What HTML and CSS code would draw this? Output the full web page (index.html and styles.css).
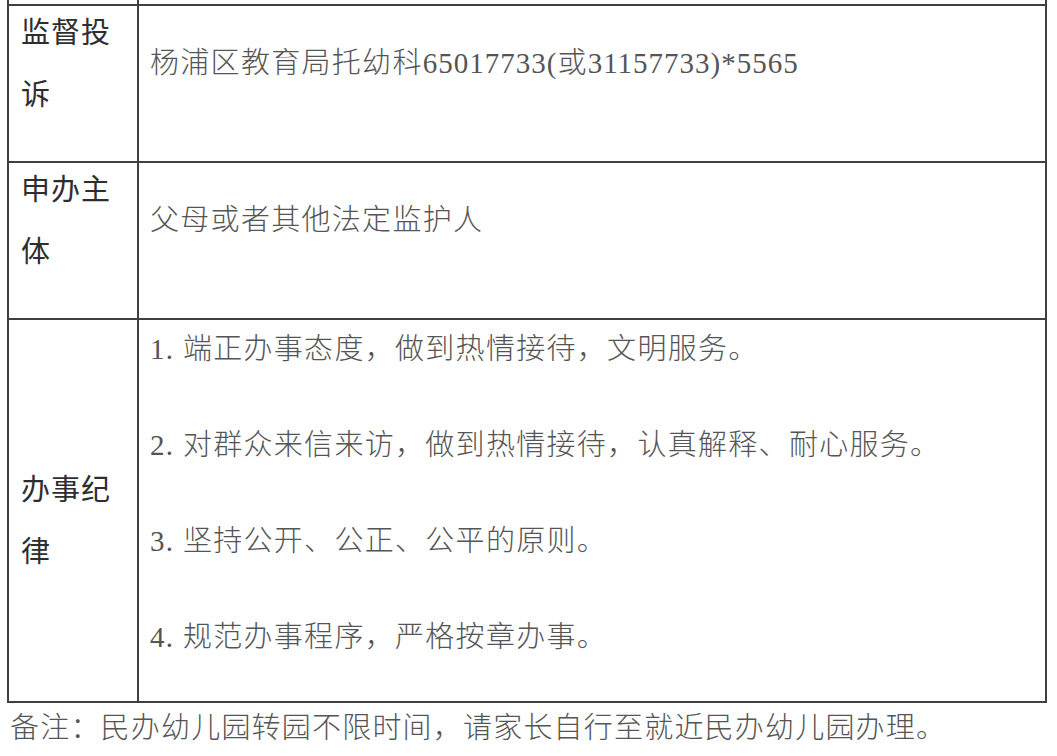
FILE: index.html
```html
<!DOCTYPE html>
<html lang="zh-CN">
<head>
  <meta charset="UTF-8" />
  <meta name="viewport" content="width=device-width, initial-scale=1" />
  <title>办事指南</title>
  <link rel="stylesheet" href="styles.css">
</head>
<body>
  <main class="guide">
    <table class="info">
      <tr class="cut">
        <td class="label"></td>
        <td class="detail"></td>
      </tr>
      <tr class="short">
        <td class="label"><div class="label-text">监督投诉</div></td>
        <td class="detail"><p>杨浦区教育局托幼科<span class="num">65017733(</span>或<span class="num">31157733)*5565</span></p></td>
      </tr>
      <tr class="short">
        <td class="label"><div class="label-text">申办主体</div></td>
        <td class="detail"><p>父母或者其他法定监护人</p></td>
      </tr>
      <tr class="tall">
        <td class="label label-mid"><div class="label-text">办事纪律</div></td>
        <td class="detail detail-list">
          <p>1. 端正办事态度，做到热情接待，文明服务。</p>
          <p>2. 对群众来信来访，做到热情接待，认真解释、耐心服务。</p>
          <p>3. 坚持公开、公正、公平的原则。</p>
          <p>4. 规范办事程序，严格按章办事。</p>
        </td>
      </tr>
    </table>

    <p class="note">备注：民办幼儿园转园不限时间，请家长自行至就近民办幼儿园办理。</p>
  </main>
</body>
</html>
```

FILE: styles.css
```css
*, *::before, *::after {
  box-sizing: border-box;
}

body {
  margin: 0;
  padding: 0;
  background: #fff;
  font-family: "Liberation Serif", "Noto Sans CJK SC", serif;
  color: #555;
  overflow: hidden;
}

.guide {
  padding-left: 7px;
}

/* main table */
table.info {
  width: 1040px;
  border-collapse: collapse;
  margin-top: -30px;
}

table.info td {
  border: 2px solid #404040;
  vertical-align: top;
}

tr.cut td {
  height: 34px;
}

tr.short td {
  height: 157px;
}

tr.tall td {
  height: 383px;
}

table.info td.label {
  width: 130px;
  padding: 0 12px;
  font-family: "Noto Sans CJK SC", sans-serif;
  font-size: 29px;
  font-weight: 400;
  letter-spacing: 1px;
  color: #2e2e2e;
}

.label-text {
  line-height: 62px;
  margin-top: -7px;
}

table.info td.label-mid {
  vertical-align: middle;
  padding-top: 22px;
}

table.info td.detail {
  padding: 28px 10px 0 11px;
  font-size: 29px;
  font-weight: 300;
  letter-spacing: 1.3px;
}

td.detail p {
  margin: 0;
  line-height: 58px;
}

.num {
  letter-spacing: 1px;
}

table.info td.detail-list {
  padding-top: 0;
}

td.detail-list p + p {
  margin-top: 38px;
}

.note {
  margin: 5px 0 0 3px;
  font-size: 29px;
  font-weight: 300;
  letter-spacing: 1.2px;
  line-height: 40px;
  color: #555;
}
```
